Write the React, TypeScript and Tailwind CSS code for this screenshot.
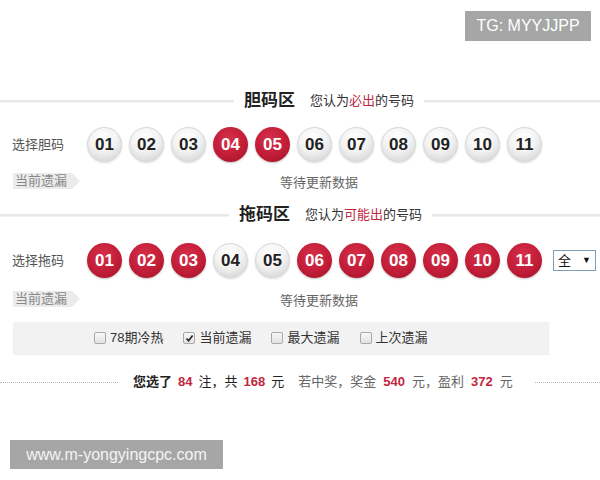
import React from 'react';

const nums = ['01', '02', '03', '04', '05', '06', '07', '08', '09', '10', '11'];

function Ball({ n, on }: { n: string; on: boolean }) {
  return (
    <div
      className={
        on
          ? 'w-[35px] h-[35px] rounded-full flex items-center justify-center text-[17px] font-bold text-white bg-[radial-gradient(circle_at_45%_35%,#d63049_0%,#c21d38_55%,#9c1226_100%)] shadow-[0_1px_2px_rgba(0,0,0,0.25)]'
          : 'w-[35px] h-[35px] rounded-full flex items-center justify-center text-[17px] font-bold text-[#222] border border-[#d6d6d6] bg-[radial-gradient(circle_at_45%_30%,#ffffff_0%,#f3f3f3_45%,#cdcdcd_100%)] shadow-[0_1px_2px_rgba(0,0,0,0.15)]'
      }
      style={{ fontFamily: '"Liberation Sans", Arial, sans-serif' }}
    >
      {n}
    </div>
  );
}

function Header({ title, pre, red, post, left }: { title: string; pre: string; red: string; post: string; left: string }) {
  return (
    <div className="flex items-center h-[20px]">
      <div className={`${left} h-[3px] bg-[#e8e8e8] border-b border-[#f2f2f2]`} />
      <span className="ml-[10px] text-[17px] font-bold text-[#222]">{title}</span>
      <span className="ml-[15px] text-[13px] text-[#333]">
        {pre}
        <span className="text-[#c0283e]">{red}</span>
        {post}
      </span>
      <div className="ml-[10px] flex-1 h-[3px] bg-[#e8e8e8] border-b border-[#f2f2f2]" />
    </div>
  );
}

function MissRow() {
  return (
    <div className="flex items-center h-[16px] pl-[13px]">
      <div className="w-[67px] h-[16px] bg-[#ebebeb] text-[#888] text-[13px] leading-[16px] pl-[2px] [clip-path:polygon(0_0,88%_0,100%_50%,88%_100%,0_100%)]">
        当前遗漏
      </div>
      <span className="ml-[200px] mt-[4px] text-[13px] text-[#666]">等待更新数据</span>
    </div>
  );
}

function Check({ label, checked }: { label: string; checked?: boolean }) {
  return (
    <div className="flex items-center gap-[4px]">
      <span className="w-[12px] h-[12px] rounded-[2px] border border-[#a9a9a9] bg-[linear-gradient(#f8f8f8,#e2e2e2)] flex items-center justify-center">
        {checked && (
          <svg width="9" height="9" viewBox="0 0 9 9">
            <path d="M1.5 4.5 L3.6 6.8 L7.6 1.6" fill="none" stroke="#222" strokeWidth="1.6" />
          </svg>
        )}
      </span>
      <span className="text-[13px] text-[#333]">{label}</span>
    </div>
  );
}

export default function App() {
  const dan = ['04', '05'];
  const tuo = ['01', '02', '03', '06', '07', '08', '09', '10', '11'];
  return (
    <div
      className="relative w-[600px] h-[480px] bg-white overflow-hidden"
      style={{ fontFamily: '"Liberation Sans", "Noto Sans CJK SC", sans-serif' }}
    >
      <div className="pt-[91px]">
        <Header title="胆码区" pre="您认为" red="必出" post="的号码" left="w-[234px]" />

        <div className="mt-[16px] flex items-center pl-[12px]">
          <span className="w-[75px] text-[13px] text-[#555]">选择胆码</span>
          <div className="flex gap-[7px]">
            {nums.map((n) => (
              <Ball key={n} n={n} on={dan.includes(n)} />
            ))}
          </div>
        </div>

        <div className="mt-[11px]">
          <MissRow />
        </div>

        <div className="mt-[16px]">
          <Header title="拖码区" pre="您认为" red="可能出" post="的号码" left="w-[229px]" />
        </div>

        <div className="mt-[18px] flex items-center pl-[12px]">
          <span className="w-[75px] text-[13px] text-[#555]">选择拖码</span>
          <div className="flex gap-[7px]">
            {nums.map((n) => (
              <Ball key={n} n={n} on={tuo.includes(n)} />
            ))}
          </div>
          <div className="ml-[11px] w-[43px] h-[21px] border border-[#7f9db9] bg-white flex items-center justify-between px-[4px] text-[13px] text-[#111]">
            <span>全</span>
            <span className="text-[9px]">▼</span>
          </div>
        </div>

        <div className="mt-[13px]">
          <MissRow />
        </div>

        <div className="mt-[15px] ml-[13px] w-[536px] h-[32px] bg-[#f2f2f2] shadow-[0_1px_1px_rgba(0,0,0,0.06)] flex items-center pl-[81px] gap-[20px]">
          <Check label="78期冷热" />
          <Check label="当前遗漏" checked />
          <Check label="最大遗漏" />
          <Check label="上次遗漏" />
        </div>

        <div className="mt-[20px] flex items-center h-[16px] text-[13px]">
          <div className="w-[118px] border-t border-dotted border-[#bbb]" />
          <div className="ml-[15px] flex items-center">
            <span className="text-[#222] font-bold">您选了</span>
            <span className="mx-[6px] text-[#c0263d] font-bold">84</span>
            <span className="text-[#222]">注，共</span>
            <span className="mx-[6px] text-[#c0263d] font-bold">168</span>
            <span className="text-[#222]">元</span>
            <span className="ml-[14px] text-[#666]">若中奖，奖金</span>
            <span className="mx-[7px] text-[#c0263d] font-bold">540</span>
            <span className="text-[#666]">元，盈利</span>
            <span className="mx-[7px] text-[#c0263d] font-bold">372</span>
            <span className="text-[#666]">元</span>
          </div>
          <div className="ml-[22px] flex-1 border-t border-dotted border-[#bbb]" />
        </div>
      </div>

      <div className="absolute left-[465px] top-[11px] w-[126px] h-[30px] bg-[#a6a6a6] text-white text-[16px] flex items-center justify-center">
        TG: MYYJJPP
      </div>
      <div className="absolute left-[10px] top-[440px] w-[213px] h-[29px] bg-[#a6a6a6] text-[#f4f4f4] text-[16px] flex items-center justify-center">
        www.m-yongyingcpc.com
      </div>
    </div>
  );
}
